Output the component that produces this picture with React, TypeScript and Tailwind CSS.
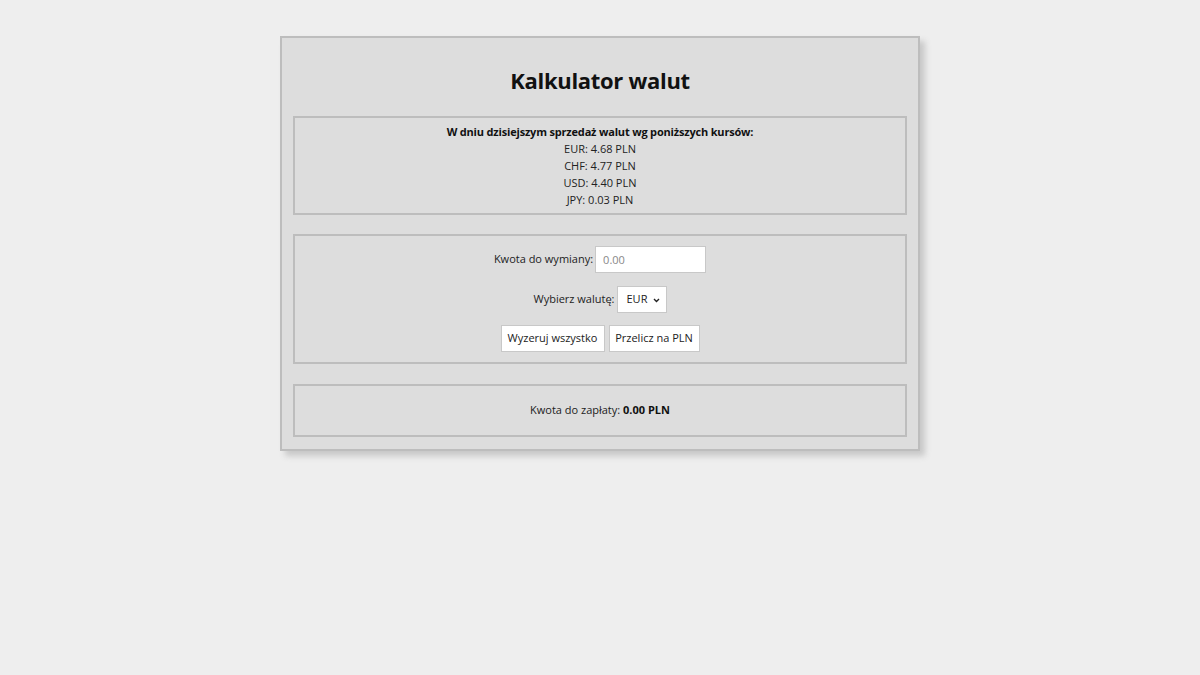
import React from "react";

export default function App() {
  const font = { fontFamily: '"Open Sans", "Noto Sans", sans-serif' };
  return (
    <div className="min-h-[675px] w-full bg-[#eeeeee] text-[#111] pt-[36px]" style={font}>
      <div className="mx-auto w-[640px] border-2 border-[#bdbdbd] bg-[#dddddd] px-[11px] pb-[12px] shadow-[5px_5px_6px_#c8c8c8]">
        <h1 className="h-[78px] flex items-center justify-center pt-[6px] text-[22px] font-bold text-[#111] tracking-[-0.3px]">
          Kalkulator walut
        </h1>
        <div className="h-[99px] border-2 border-[#bdbdbd] pt-[5px] text-center text-[11px] leading-[17px] text-[#222]">
          <div className="font-bold text-[#111] tracking-[-0.18px]">W dniu dzisiejszym sprzedaż walut wg poniższych kursów:</div>
          <div>EUR: 4.68 PLN</div>
          <div>CHF: 4.77 PLN</div>
          <div>USD: 4.40 PLN</div>
          <div>JPY: 0.03 PLN</div>
        </div>
        <div className="mt-[19px] h-[130px] border-2 border-[#bdbdbd] pt-[10px] flex flex-col items-center gap-[13px] text-[11px] text-[#222]">
          <div className="flex items-center gap-[2px]">
            <span>Kwota do wymiany:</span>
            <input
              className="h-[27px] w-[111px] border border-[#c8c8c8] bg-white px-[7px] text-[11px] outline-none placeholder:text-[#888]"
              placeholder="0.00"
              style={font}
            />
          </div>
          <div className="flex items-center gap-[2px]">
            <span>Wybierz walutę:</span>
            <div className="relative h-[27px] w-[50px] border border-[#c8c8c8] bg-white flex items-center pl-[9px] text-[11px]">
              EUR
              <svg className="absolute right-[6px] top-[11px]" width="7" height="5" viewBox="0 0 7 5">
                <path d="M1 1 L3.5 3.5 L6 1" stroke="#222" strokeWidth="1.4" fill="none" />
              </svg>
            </div>
          </div>
          <div className="flex items-center gap-[4px] -mt-[1px]">
            <button className="h-[27px] w-[104px] border border-[#c8c8c8] bg-white text-[11px] text-[#222]" style={font}>
              Wyzeruj wszystko
            </button>
            <button className="h-[27px] w-[91px] border border-[#c8c8c8] bg-white text-[11px] text-[#222]" style={font}>
              Przelicz na PLN
            </button>
          </div>
        </div>
        <div className="mt-[20px] h-[53px] border-2 border-[#bdbdbd] flex items-center justify-center text-[11px] text-[#222]">
          <span>
            Kwota do zapłaty: <b className="text-[#111]">0.00 PLN</b>
          </span>
        </div>
      </div>
    </div>
  );
}
